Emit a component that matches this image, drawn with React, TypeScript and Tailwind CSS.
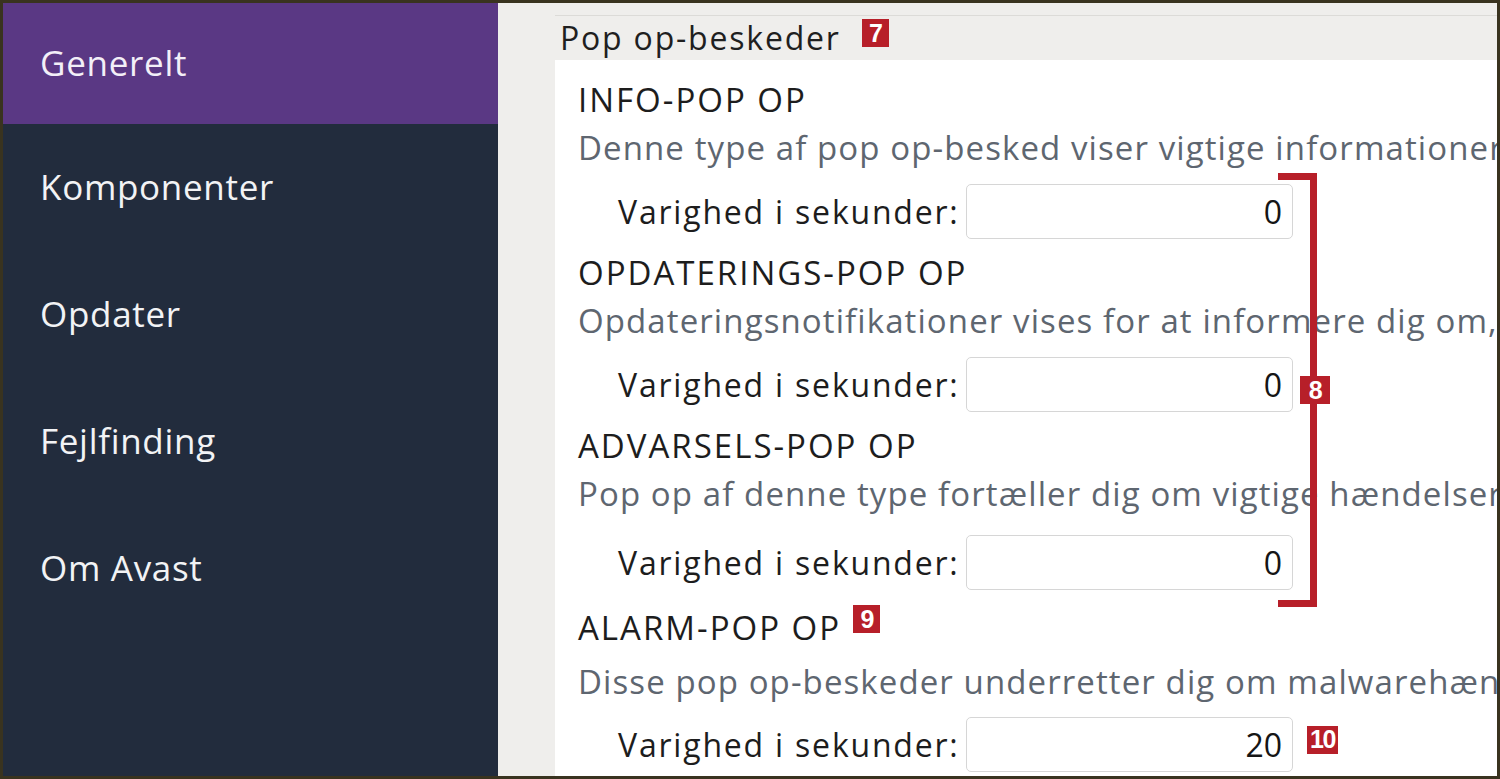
import React from 'react';

const FONT = { fontFamily: '"Open Sans", Lato, sans-serif' };

interface BadgeProps {
  n: string;
  className?: string;
}

const Badge: React.FC<BadgeProps> = ({ n, className = '' }) => (
  <span
    className={`inline-flex items-center justify-center bg-[#b71f29] text-white font-bold text-[25px] leading-none h-[28px] px-[3px] min-w-[27px] tracking-[-1.5px] ${className}`}
    style={{ fontFamily: '"Liberation Sans", Arial, sans-serif' }}
  >
    {n}
  </span>
);

interface SectionProps {
  title: string;
  desc: string;
  value: string;
  badge?: React.ReactNode;
  inputBadge?: React.ReactNode;
  rowTop: string;
  descTop?: string;
  bottom: string;
}

const Section: React.FC<SectionProps> = ({ title, desc, value, badge, inputBadge, rowTop, descTop = 'mt-0', bottom }) => (
  <div className={bottom}>
    <div className="h-[48px] flex items-center text-[33px] tracking-[2px] text-[#1d1d1d] whitespace-nowrap">
      {title}
      {badge}
    </div>
    <div className={`h-[48px] flex items-center text-[33px] tracking-[1.1px] text-[#5e6670] whitespace-nowrap ${descTop}`}>{desc}</div>
    <div className={`flex items-center pl-[40px] ${rowTop}`}>
      <span className="w-[342px] text-[32px] tracking-[1.8px] text-[#1d1d1d] whitespace-nowrap">Varighed i sekunder:</span>
      <div className="ml-[6px] w-[327px] h-[55px] border border-[#d6d6d6] rounded-[5px] bg-white flex items-center justify-end pr-[10px] text-[32px] text-[#151515]">
        {value}
      </div>
      {inputBadge}
    </div>
  </div>
);

const navItems = ['Komponenter', 'Opdater', 'Fejlfinding', 'Om Avast'];

export default function App() {
  return (
    <div
      className="relative w-[1500px] h-[779px] border-[3px] border-[#39331f] flex overflow-hidden bg-[#efeeec]"
      style={FONT}
    >
      {/* Sidebar */}
      <div className="w-[495px] shrink-0 bg-[#222c3d] flex flex-col">
        <div className="h-[121px] bg-[#5a3884] flex items-center pl-[37px] text-[35px] tracking-[0.7px] text-[#f3eff8]">Generelt</div>
        {navItems.map((item) => (
          <div key={item} className="h-[127px] flex items-center pl-[37px] text-[35px] tracking-[0.7px] text-[#f2f3f5]">
            {item}
          </div>
        ))}
      </div>

      {/* Content */}
      <div className="flex-1 min-w-0 pl-[57px] pt-[12px] flex flex-col">
        <div className="h-px bg-[#dcdbd8]" />
        <div className="h-[44px] flex items-center pl-[5px] text-[32px] tracking-[1.8px] text-[#1f1f1f] whitespace-nowrap">
          Pop op-beskeder
          <Badge n="7" className="ml-[21px] -mt-[10px]" />
        </div>
        <div className="flex-1 bg-white pl-[23px] pt-[16px] overflow-hidden">
          <Section
            title="INFO-POP OP"
            desc="Denne type af pop op-besked viser vigtige informationer"
            value="0"
            rowTop="mt-[12px]"
            bottom="mb-[10px]"
          />
          <Section
            title="OPDATERINGS-POP OP"
            desc="Opdateringsnotifikationer vises for at informere dig om, at"
            value="0"
            rowTop="mt-[12px]"
            bottom="mb-[10px]"
          />
          <Section
            title="ADVARSELS-POP OP"
            desc="Pop op af denne type fortæller dig om vigtige hændelser"
            value="0"
            rowTop="mt-[17px]"
            bottom="mb-[14px]"
          />
          <Section
            title="ALARM-POP OP"
            desc="Disse pop op-beskeder underretter dig om malwarehændelser"
            value="20"
            badge={<Badge n="9" className="ml-[12px] -mt-[18px]" />}
            inputBadge={<Badge n="10" className="ml-[14px] -mt-[10px]" />}
            descTop="mt-[6px]"
            rowTop="mt-[11px]"
            bottom="mb-0"
          />
        </div>
      </div>

      {/* Annotation bracket 8 */}
      <div className="absolute left-[1275px] top-[170px] w-[39px] h-[434px] border-t-[7px] border-b-[7px] border-r-[7px] border-[#b71f29]" />
      <Badge n="8" className="absolute left-[1297px] top-[373px] w-[30px]" />
    </div>
  );
}
